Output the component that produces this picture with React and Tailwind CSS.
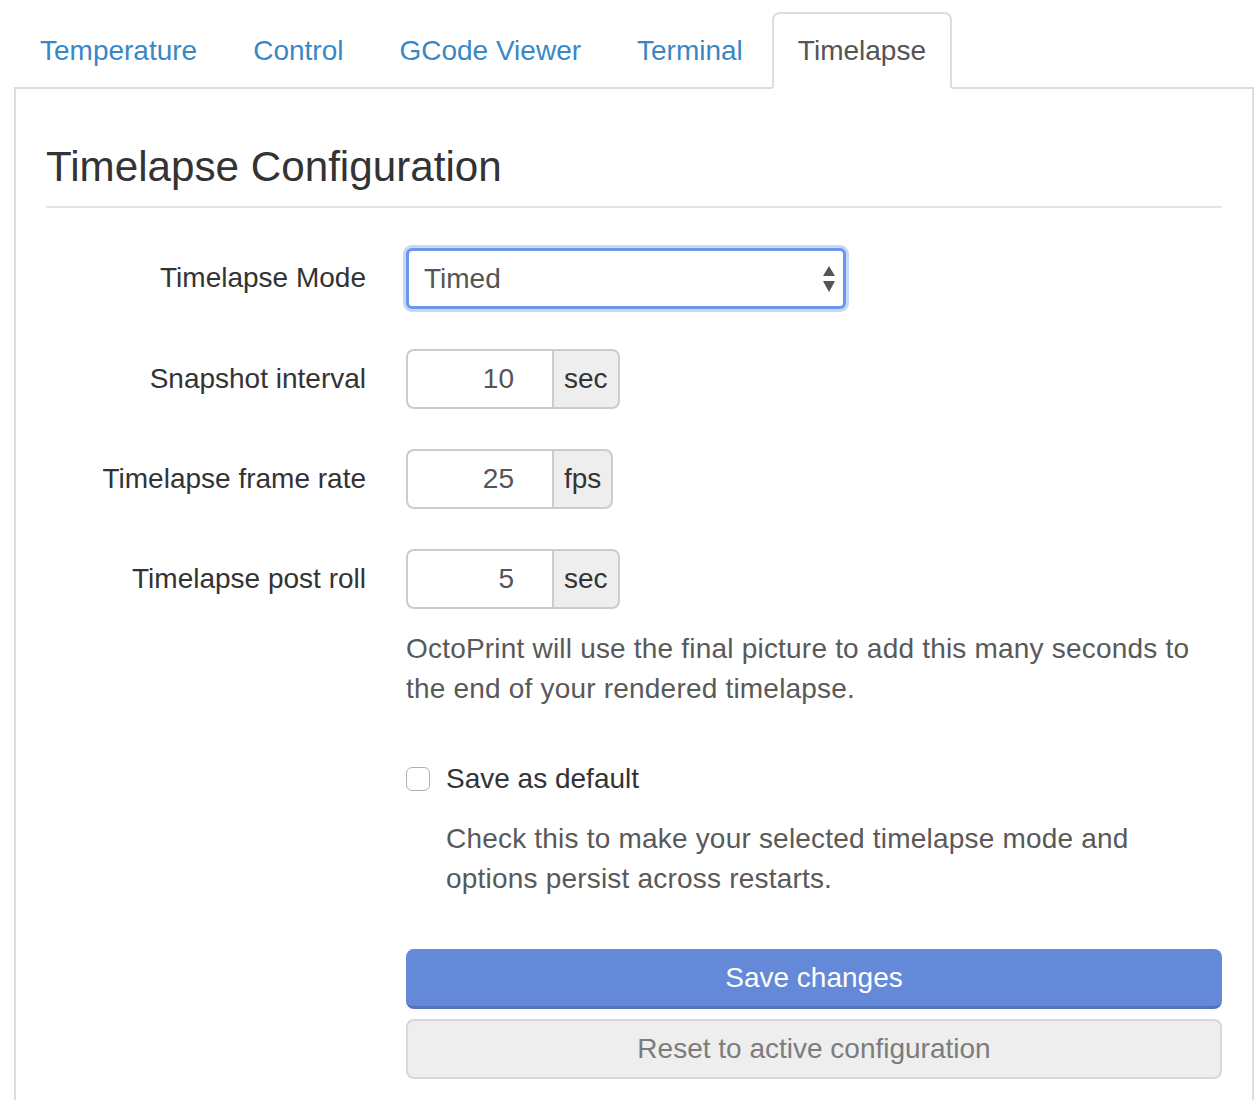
import React, { useState } from 'react';

const font = { fontFamily: '"Liberation Sans", Arial, sans-serif' };

const tabs = ['Temperature', 'Control', 'GCode Viewer', 'Terminal', 'Timelapse'];

function AddonInput({ value, unit }) {
  return (
    <div className="flex h-[60px]">
      <input
        type="text"
        defaultValue={value}
        className="w-[146px] h-[60px] border-2 border-r-0 border-[#cccccc] rounded-l-[8px] bg-white text-right pr-[38px] text-[28px] text-[#555555] outline-none"
      />
      <span className="h-[60px] px-[10px] flex items-center border-2 border-[#cccccc] rounded-r-[8px] bg-[#eeeeee] text-[28px] text-[#333333]">
        {unit}
      </span>
    </div>
  );
}

function Row({ label, children }) {
  return (
    <div className="flex mb-[40px]">
      <label className="w-[320px] shrink-0 text-right text-[28px] leading-[40px] pt-[10px] text-[#333333]">{label}</label>
      <div className="ml-[40px] flex-1">{children}</div>
    </div>
  );
}

export default function App() {
  const [active, setActive] = useState('Timelapse');
  const [mode, setMode] = useState('timed');
  const [saveDefault, setSaveDefault] = useState(false);

  return (
    <div className="min-h-[1100px] bg-white pt-[12px]" style={font}>
      <ul className="flex ml-[13px] relative z-10">
        {tabs.map((t) => (
          <li key={t} className="mr-[2px] -mb-[2px]">
            <button
              onClick={() => setActive(t)}
              className={
                t === active
                  ? 'h-[77px] px-[24px] border-2 border-[#dddddd] border-b-white bg-white rounded-t-[8px] text-[28px] text-[#555555]'
                  : 'h-[77px] px-[25px] border-2 border-transparent text-[28px] text-[#3a87c6]'
              }
            >
              {t}
            </button>
          </li>
        ))}
      </ul>

      <div className="ml-[14px] w-[1240px] border-2 border-[#dddddd] px-[30px] pt-[39px] pb-[40px]">
        <h3 className="text-[42.2px] leading-[78px] text-[#333333] border-b-2 border-[#e5e5e5] mb-[40px]">
          Timelapse Configuration
        </h3>

        <Row label="Timelapse Mode">
          <div className="relative w-[440px]">
            <select
              value={mode}
              onChange={(e) => setMode(e.target.value)}
              className="appearance-none w-[440px] h-[61px] border-[3px] border-[#6a97ea] rounded-[6px] bg-white pl-[15px] text-[28px] text-[#555555] outline-none shadow-[0_0_0_3px_rgba(140,175,245,0.5)]"
            >
              <option value="off">Off</option>
              <option value="zchange">On Z Change</option>
              <option value="timed">Timed</option>
            </select>
            <svg className="absolute right-[10px] top-[18px] pointer-events-none" width="14" height="26" viewBox="0 0 14 26">
              <path d="M7 0 L13 10 L1 10 Z" fill="#555555" />
              <path d="M1 15 L13 15 L7 26 Z" fill="#555555" />
            </svg>
          </div>
        </Row>

        <Row label="Snapshot interval">
          <AddonInput value="10" unit="sec" />
        </Row>

        <Row label="Timelapse frame rate">
          <AddonInput value="25" unit="fps" />
        </Row>

        <div className="flex mb-[40px]">
          <label className="w-[320px] shrink-0 text-right text-[28px] leading-[40px] pt-[10px] text-[#333333]">
            Timelapse post roll
          </label>
          <div className="ml-[40px] flex-1">
            <AddonInput value="5" unit="sec" />
            <p className="mt-[20px] text-[28px] leading-[40px] tracking-[0.2px] text-[#595959]">
              OctoPrint will use the final picture to add this many seconds to the end of your rendered timelapse.
            </p>
          </div>
        </div>

        <div className="ml-[360px] pt-[10px] mb-[50px]">
          <label className="flex items-center text-[28px] leading-[40px] text-[#333333] cursor-pointer">
            <span
              onClick={() => setSaveDefault(!saveDefault)}
              className="w-[24px] h-[24px] border-[1.5px] border-[#b0b0b0] rounded-[6px] bg-white mr-[16px] flex items-center justify-center text-[18px]"
            >
              {saveDefault ? '✓' : ''}
            </span>
            Save as default
          </label>
          <p className="mt-[20px] ml-[40px] max-w-[720px] text-[28px] leading-[40px] tracking-[0.2px] text-[#595959]">
            Check this to make your selected timelapse mode and options persist across restarts.
          </p>
        </div>

        <div className="ml-[360px] flex flex-col gap-[10px]">
          <button className="h-[60px] w-full rounded-[8px] bg-[#6389d8] border-b-[3px] border-[#5274bd] text-white text-[28px]">
            Save changes
          </button>
          <button className="h-[60px] w-full rounded-[8px] bg-[#eeeeee] border-2 border-[#d8d8d8] text-[#7c7c7c] text-[28px]">
            Reset to active configuration
          </button>
        </div>
      </div>
    </div>
  );
}
